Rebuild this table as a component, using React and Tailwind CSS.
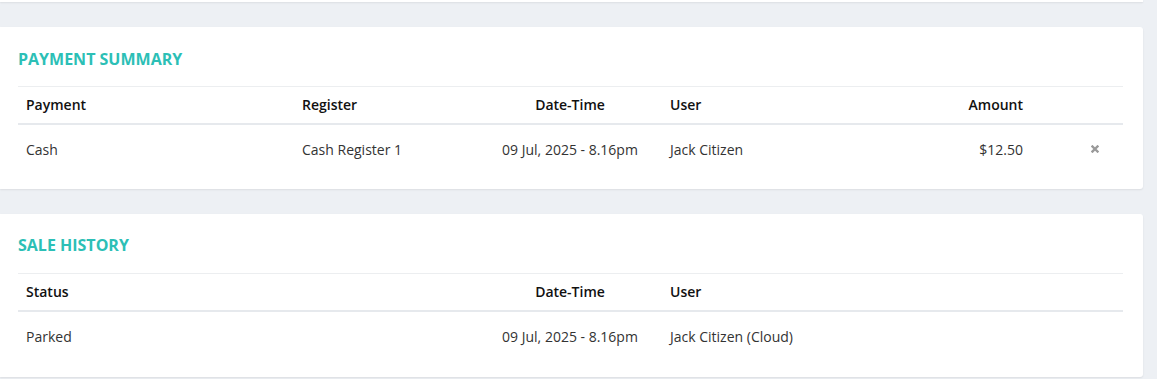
export default function App() {
  const font = { fontFamily: '"Open Sans", "Noto Sans", sans-serif' };
  const cols = "grid grid-cols-[276px_184px_184px_200px_169px_1fr]";
  return (
    <div className="min-h-[379px] bg-[#edf0f4] text-[14px]" style={font}>
      {/* tail of the card above */}
      <div className="mr-[14px] h-[2px] bg-white shadow-[0_1px_2px_rgba(0,0,0,0.08)]" />

      {/* Payment summary */}
      <section className="mt-[25px] mr-[14px] rounded-r-[3px] bg-white pl-[18px] pr-[20px] pt-[21px] pb-[16px] shadow-[0_1px_2px_rgba(0,0,0,0.08)]">
        <h2 className="text-[16px] leading-[22px] font-bold uppercase text-[#2cbfb6]">Payment Summary</h2>
        <div className="mt-[16px] border-t border-[#eceef0]">
          <div className={`${cols} h-[38px] pb-[2px] items-center border-b-2 border-[#e6e9ed] font-semibold text-[#111]`}>
            <div className="px-[8px]">Payment</div>
            <div className="px-[8px]">Register</div>
            <div className="px-[8px] text-center">Date-Time</div>
            <div className="px-[8px]">User</div>
            <div className="px-[8px] text-right">Amount</div>
            <div />
          </div>
          <div className={`${cols} h-[48px] items-center text-[#333]`}>
            <div className="px-[8px]">Cash</div>
            <div className="px-[8px]">Cash Register 1</div>
            <div className="px-[8px] text-center">09 Jul, 2025 - 8.16pm</div>
            <div className="px-[8px]">Jack Citizen</div>
            <div className="px-[8px] text-right">$12.50</div>
            <div className="flex justify-end pr-[24px]">
              <svg width="8" height="8" viewBox="0 0 8 8" className="text-[#9a9a9a]">
                <path d="M1.5 1.5L6.5 6.5M6.5 1.5L1.5 6.5" stroke="currentColor" strokeWidth="2.4" strokeLinecap="square" />
              </svg>
            </div>
          </div>
        </div>
      </section>

      {/* Sale history */}
      <section className="mt-[25px] mr-[14px] rounded-r-[3px] bg-white pl-[18px] pr-[20px] pt-[20px] pb-[17px] shadow-[0_1px_2px_rgba(0,0,0,0.08)]">
        <h2 className="text-[16px] leading-[22px] font-bold uppercase text-[#2cbfb6]">Sale History</h2>
        <div className="mt-[17px] border-t border-[#eceef0]">
          <div className={`${cols} h-[38px] pb-[2px] items-center border-b-2 border-[#e6e9ed] font-semibold text-[#111]`}>
            <div className="col-span-2 px-[8px]">Status</div>
            <div className="px-[8px] text-center">Date-Time</div>
            <div className="px-[8px]">User</div>
            <div className="col-span-2" />
          </div>
          <div className={`${cols} h-[48px] items-center text-[#333]`}>
            <div className="col-span-2 px-[8px]">Parked</div>
            <div className="px-[8px] text-center">09 Jul, 2025 - 8.16pm</div>
            <div className="col-span-2 px-[8px]">Jack Citizen (Cloud)</div>
            <div />
          </div>
        </div>
      </section>
    </div>
  );
}
